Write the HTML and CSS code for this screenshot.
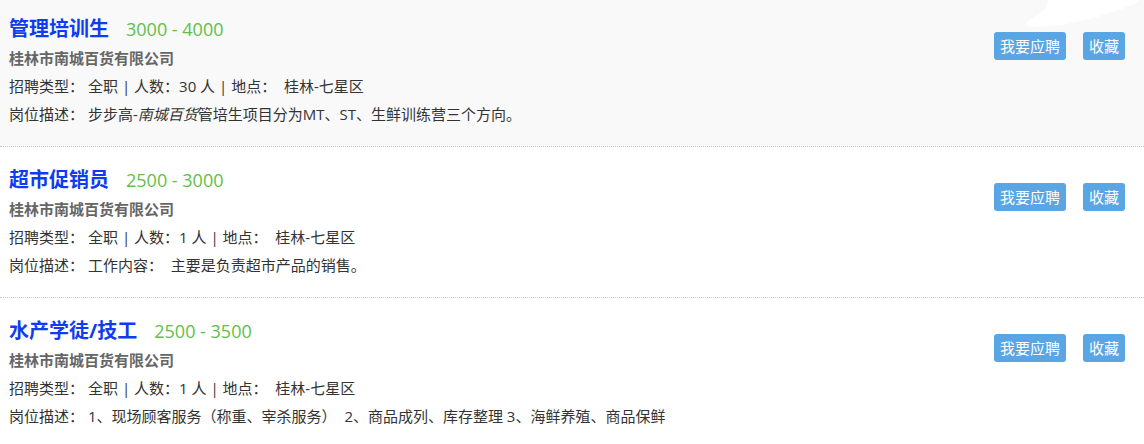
FILE: index.html
```html
<!DOCTYPE html>
<html lang="zh-CN">
<head>
    <meta charset="UTF-8">
    <meta name="viewport" content="width=device-width, initial-scale=1.0">
    <title>招聘信息</title>
    <link rel="stylesheet" href="styles.css">
</head>
<body>
    <div class="job-list">
        <div class="job active">
            <svg class="cloud" width="124" height="32" viewBox="0 0 124 32">
                <path d="M4 26 C10 18 20 14 26 8 L28 0 L120 0 C110 8 90 12 80 16 C60 22 30 29 4 26 Z" fill="#fff"/>
            </svg>
            <div class="job-info">
                <h3 class="job-title">管理培训生<span class="salary">3000 - 4000</span></h3>
                <p class="company">桂林市南城百货有限公司</p>
                <p class="row"><span class="label">招聘类型：</span>全职 | 人数：30 人 | 地点：&nbsp;&nbsp;桂林-七星区</p>
                <p class="row"><span class="label">岗位描述：</span>步步高-<em>南城百货</em>管培生项目分为MT、ST、生鲜训练营三个方向。</p>
            </div>
            <div class="job-actions">
                <button class="btn">我要应聘</button>
                <button class="btn">收藏</button>
            </div>
        </div>

        <div class="job">
            <div class="job-info">
                <h3 class="job-title">超市促销员<span class="salary">2500 - 3000</span></h3>
                <p class="company">桂林市南城百货有限公司</p>
                <p class="row"><span class="label">招聘类型：</span>全职 | 人数：1 人 | 地点：&nbsp;&nbsp;桂林-七星区</p>
                <p class="row"><span class="label">岗位描述：</span>工作内容：&nbsp;&nbsp;主要是负责超市产品的销售。</p>
            </div>
            <div class="job-actions">
                <button class="btn">我要应聘</button>
                <button class="btn">收藏</button>
            </div>
        </div>

        <div class="job">
            <div class="job-info">
                <h3 class="job-title">水产学徒/技工<span class="salary">2500 - 3500</span></h3>
                <p class="company">桂林市南城百货有限公司</p>
                <p class="row"><span class="label">招聘类型：</span>全职 | 人数：1 人 | 地点：&nbsp;&nbsp;桂林-七星区</p>
                <p class="row"><span class="label">岗位描述：</span>1、现场顾客服务（称重、宰杀服务）&nbsp;&nbsp;2、商品成列、库存整理 3、海鲜养殖、商品保鲜</p>
            </div>
            <div class="job-actions">
                <button class="btn">我要应聘</button>
                <button class="btn">收藏</button>
            </div>
        </div>
    </div>
</body>
</html>
```

FILE: styles.css
```css
* {
    box-sizing: border-box;
}

body {
    margin: 0;
    padding: 0;
    background-color: #fff;
    font-family: "Open Sans", "Noto Sans CJK SC", sans-serif;
    color: #333;
    overflow: hidden;
}

.job-list {
    margin-top: -4px;
}

.job {
    display: flex;
    position: relative;
    padding: 20px 19px 18px 9px;
    border-bottom: 1px dotted #c8c8c8;
}

.job.active {
    background-color: #f9f9f9;
}

.cloud {
    position: absolute;
    top: 4px;
    right: 0;
}

.job-info {
    flex: 1;
}

.job-title {
    margin: 0 0 2px;
    font-size: 20px;
    line-height: 26px;
    font-weight: 700;
    color: #0f3cf2;
}

.salary {
    margin-left: 17px;
    font-size: 18px;
    font-weight: 400;
    color: #5fbf4a;
}

.company {
    margin: 0;
    font-size: 15px;
    line-height: 28px;
    font-weight: 700;
    color: #666;
}

.row {
    margin: 0;
    font-size: 15px;
    line-height: 28px;
}

.label {
    margin-right: 4px;
}

.row em {
    font-style: italic;
}

.job-actions {
    display: flex;
    gap: 17px;
    align-self: flex-start;
    margin-top: 16px;
    position: relative;
}

.btn {
    border: none;
    border-radius: 3px;
    background-color: #5aa5e3;
    color: #fff;
    font-family: "Noto Sans CJK SC", sans-serif;
    font-size: 15px;
    line-height: 28px;
    padding: 0 6px;
    cursor: pointer;
}
```
